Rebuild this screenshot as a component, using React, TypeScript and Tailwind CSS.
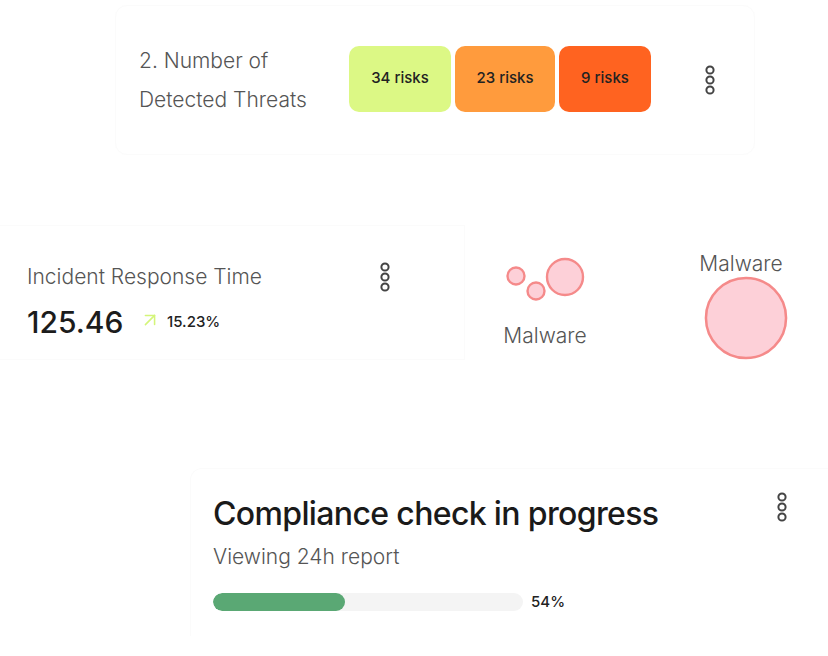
import React from "react";
import { ArrowUpRight } from "lucide-react";

const Dots = () => (
  <svg width="12" height="32" viewBox="0 0 12 32" className="shrink-0">
    {[6, 16, 26].map((cy) => (
      <circle key={cy} cx="6" cy={cy} r="3.6" fill="none" stroke="#444" strokeWidth="2" />
    ))}
  </svg>
);

const risks = [
  { label: "34 risks", w: "w-[102px]", bg: "bg-[#dcf885]" },
  { label: "23 risks", w: "w-[100px]", bg: "bg-[#ff9b3d]" },
  { label: "9 risks", w: "w-[92px]", bg: "bg-[#ff6320]" },
];

const App = () => {
  const progress = 54;
  return (
    <div className="w-[828px] h-[656px] bg-white overflow-hidden font-['Inter','Liberation_Sans',sans-serif] text-[#222]">
      <div className="pt-[5px]">
        <div className="ml-[115px] w-[640px] h-[150px] rounded-xl border border-[#fbfbfb] flex items-center pl-[23px]">
          <div className="w-[210px] text-[21px] leading-[39px] text-[#555] font-light">
            <div>2. Number of</div>
            <div>Detected Threats</div>
          </div>
          <div className="flex gap-[4px] -mt-[3px]">
            {risks.map((r) => (
              <div
                key={r.label}
                className={`${r.w} ${r.bg} h-[66px] rounded-[10px] flex items-center justify-center text-[15px] font-medium text-[#222]`}
              >
                {r.label}
              </div>
            ))}
          </div>
          <div className="ml-[53px]">
            <Dots />
          </div>
        </div>
      </div>

      <div className="mt-[70px] h-[135px] flex">
        <div className="w-[465px] h-full border-y border-r border-[#fbfbfb] pl-[27px] pt-[35px]">
          <div className="w-[364px] flex items-center justify-between">
            <div className="text-[21px] leading-[30px] text-[#555] font-light">Incident Response Time</div>
            <Dots />
          </div>
          <div className="flex items-center mt-[11px] h-[36px]">
            <div className="text-[30px] leading-[36px] font-medium text-[#1c1c1c] w-[112px]">125.46</div>
            <ArrowUpRight size={22} strokeWidth={1.7} color="#d4f57a" className="-mt-[4px]" />
            <div className="ml-[6px] text-[15px] font-medium text-[#222]">15.23%</div>
          </div>
        </div>
        <div className="w-[175px] h-full flex flex-col pl-[35px] pt-[30px]">
          <svg width="100" height="50" viewBox="0 0 100 50">
            <circle cx="16" cy="21" r="8.5" fill="#fdd0d8" stroke="#f58a8a" strokeWidth="2.4" />
            <circle cx="36" cy="36" r="8.5" fill="#fdd0d8" stroke="#f58a8a" strokeWidth="2.4" />
            <circle cx="65" cy="22" r="18" fill="#fdd0d8" stroke="#f58a8a" strokeWidth="2.4" />
          </svg>
          <div className="mt-[19px] w-[90px] text-center text-[21px] leading-[24px] text-[#555] font-light">Malware</div>
        </div>
        <div className="flex-1 h-full flex flex-col items-center pt-[27px] pl-[22px]">
          <div className="text-[21px] leading-[24px] text-[#555] font-light -ml-[8px]">Malware</div>
          <svg width="86" height="86" viewBox="0 0 86 86" className="mt-[0px] ml-[2px]">
            <circle cx="43" cy="43" r="41" fill="#fdd0d8" stroke="#f58a8a" strokeWidth="2.6" />
          </svg>
        </div>
      </div>

      <div className="mt-[108px] ml-[190px] h-[168px] border-l border-t border-[#fbfbfb] rounded-tl-xl pl-[22px] pr-[40px] pt-[22px]">
        <div className="flex justify-between items-start">
          <div className="text-[32px] leading-[40px] font-medium tracking-[-0.02em] text-[#1a1a1a] mt-[3px]">
            Compliance check in progress
          </div>
          <Dots />
        </div>
        <div className="mt-[10px] text-[21px] leading-[26px] text-[#555] font-light">Viewing 24h report</div>
        <div className="mt-[21px] flex items-center">
          <div className="w-[310px] h-[18px] rounded-full bg-[#f4f4f4] overflow-hidden">
            <div className="h-full rounded-full bg-[#5aa874]" style={{ width: `${(132 / 310) * 100}%` }} />
          </div>
          <div className="ml-[8px] text-[15px] font-medium">{progress}%</div>
        </div>
      </div>
    </div>
  );
};

export default App;
